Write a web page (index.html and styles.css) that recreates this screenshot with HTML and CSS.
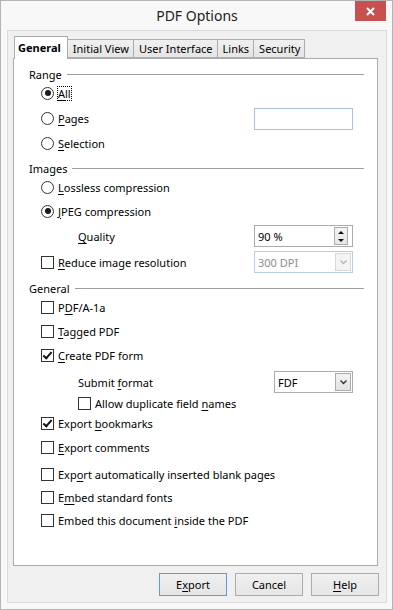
FILE: index.html
```html
<!DOCTYPE html>
<html lang="en">
<head>
    <meta charset="UTF-8">
    <meta name="viewport" content="width=device-width, initial-scale=1.0">
    <title>PDF Options</title>
    <link rel="stylesheet" href="styles.css">
</head>
<body>

    <div class="window">
        <div class="titlebar">
            <span></span>
            <div class="title">PDF Options</div>
            <button class="close" title="Close">
                <svg width="9" height="9" viewBox="0 0 9 9"><path d="M1 1 L8 8 M8 1 L1 8" stroke="#fff" stroke-width="2"/></svg>
            </button>
        </div>

        <div class="client">
            <div class="tabs">
                <div class="tab active">General</div>
                <div class="tab">Initial View</div>
                <div class="tab">User Interface</div>
                <div class="tab">Links</div>
                <div class="tab">Security</div>
            </div>

            <div class="panel">
                <!-- Range -->
                <div class="group">
                    <div class="group-title">Range</div>
                    <div class="row">
                        <span class="radio checked"></span>
                        <span class="focus"><u>A</u>ll</span>
                    </div>
                    <div class="row tall">
                        <span class="radio"></span>
                        <span><u>P</u>ages</span>
                        <div class="textbox"></div>
                    </div>
                    <div class="row">
                        <span class="radio"></span>
                        <span><u>S</u>election</span>
                    </div>
                </div>

                <!-- Images -->
                <div class="group">
                    <div class="group-title">Images</div>
                    <div class="row">
                        <span class="radio"></span>
                        <span><u>L</u>ossless compression</span>
                    </div>
                    <div class="row">
                        <span class="radio checked"></span>
                        <span><u>J</u>PEG compression</span>
                    </div>
                    <div class="row tall sub">
                        <span><u>Q</u>uality</span>
                        <div class="spin">
                            <span class="spin-value">90 %</span>
                            <span class="spin-buttons">
                                <span class="arrow up"></span>
                                <span class="arrow down"></span>
                            </span>
                        </div>
                    </div>
                    <div class="row tall">
                        <span class="check"></span>
                        <span><u>R</u>educe image resolution</span>
                        <div class="combo disabled">
                            <span class="combo-value">300 DPI</span>
                            <span class="combo-button">
                                <svg width="7" height="5" viewBox="0 0 7 5"><path d="M0.5 0.5 L3.5 3.5 L6.5 0.5" fill="none" stroke="#b5b5b5" stroke-width="1.4"/></svg>
                            </span>
                        </div>
                    </div>
                </div>

                <!-- General -->
                <div class="group">
                    <div class="group-title">General</div>
                    <div class="row">
                        <span class="check"></span>
                        <span>P<u>D</u>F/A-1a</span>
                    </div>
                    <div class="row">
                        <span class="check"></span>
                        <span><u>T</u>agged PDF</span>
                    </div>
                    <div class="row">
                        <span class="check checked"></span>
                        <span><u>C</u>reate PDF form</span>
                    </div>
                    <div class="row tall sub spaced">
                        <span>Submit <u>f</u>ormat</span>
                        <div class="combo short">
                            <span class="combo-value">FDF</span>
                            <span class="combo-button">
                                <svg width="7" height="5" viewBox="0 0 7 5"><path d="M0.5 0.5 L3.5 3.5 L6.5 0.5" fill="none" stroke="#333" stroke-width="1.4"/></svg>
                            </span>
                        </div>
                    </div>
                    <div class="row small sub">
                        <span class="check"></span>
                        <span>Allow duplicate field <u>n</u>ames</span>
                    </div>
                    <div class="row">
                        <span class="check checked"></span>
                        <span>Export <u>b</u>ookmarks</span>
                    </div>
                    <div class="row">
                        <span class="check"></span>
                        <span><u>E</u>xport comments</span>
                    </div>
                    <div class="row spaced-more">
                        <span class="check"></span>
                        <span>Exp<u>o</u>rt automatically inserted blank pages</span>
                    </div>
                    <div class="row short-row">
                        <span class="check"></span>
                        <span>E<u>m</u>bed standard fonts</span>
                    </div>
                    <div class="row">
                        <span class="check"></span>
                        <span>Embed this document <u>i</u>nside the PDF</span>
                    </div>
                </div>
            </div>

            <div class="buttons">
                <button class="default">E<u>x</u>port</button>
                <button>Cancel</button>
                <button><u>H</u>elp</button>
            </div>
        </div>
    </div>

</body>
</html>
```

FILE: styles.css
```css
body {
    margin: 0;
    font-family: "Noto Sans", "Open Sans", sans-serif;
    font-size: 11px;
    color: #000;
    background-color: #fff;
}
u {
    text-decoration-thickness: 1px;
    text-underline-offset: 2px;
}
.window {
    width: 393px;
    height: 610px;
    box-sizing: border-box;
    border: 1px solid #b4b4b4;
    background-color: #f8f8f8;
    padding: 0 5px 6px 6px;
    display: flex;
    flex-direction: column;
}
.titlebar {
    height: 29px;
    display: grid;
    grid-template-columns: 1fr auto 1fr;
    align-items: start;
}
.title {
    font-size: 14px;
    line-height: 30px;
    color: #222;
}
.close {
    justify-self: end;
    width: 31px;
    height: 20px;
    margin-right: 1px;
    border: none;
    padding: 0;
    background-color: #c75050;
    display: flex;
    align-items: center;
    justify-content: center;
}
.client {
    flex: 1;
    border: 1px solid #dadada;
    background-color: #f0f0f0;
    padding: 5px 8px 0 5px;
    display: flex;
    flex-direction: column;
}
.tabs {
    display: flex;
    align-items: flex-end;
    height: 22px;
    margin-left: 1px;
    position: relative;
    z-index: 1;
}
.tab {
    height: 19px;
    line-height: 18px;
    box-sizing: border-box;
    padding: 0 4px 0 5px;
    border: 1px solid #acacac;
    border-left: none;
    background: linear-gradient(#f0f0f0, #e5e5e5);
}
.tab.active {
    height: 23px;
    margin-bottom: -1px;
    border-left: 1px solid #acacac;
    border-bottom: none;
    background: #fff;
    font-weight: bold;
    line-height: 22px;
    padding: 0 6px 0 3px;
}
.panel {
    height: 508px;
    box-sizing: border-box;
    background-color: #fff;
    border: 1px solid #acacac;
    padding: 8px 13px 0 15px;
}
.group {
    margin-bottom: 6px;
}
.group-title {
    height: 14px;
    display: flex;
    align-items: center;
    gap: 5px;
}
.group-title::after {
    content: "";
    flex: 1;
    height: 1px;
    background-color: #a0a0a0;
}
.row {
    height: 24px;
    display: flex;
    align-items: center;
    gap: 4px;
    padding: 0 11px 0 12px;
}
.row.tall {
    height: 26px;
}
.row.small {
    height: 16px;
}
.row.sub {
    padding-left: 49px;
}
.row.spaced {
    margin-top: 2px;
}
.row.spaced-more {
    margin-top: 3px;
}
.row.short-row {
    height: 22px;
}
.focus {
    outline: 1px dotted #000;
    outline-offset: 0;
    line-height: 13px;
}
.radio, .check {
    width: 13px;
    height: 13px;
    box-sizing: border-box;
    border: 1px solid #333;
    background-color: #fff;
    flex: none;
    display: flex;
    align-items: center;
    justify-content: center;
}
.radio {
    border-radius: 50%;
}
.radio.checked::after {
    content: "";
    width: 6px;
    height: 6px;
    border-radius: 50%;
    background-color: #1a1a1a;
}
.check.checked::after {
    content: "";
    width: 7px;
    height: 3px;
    border-left: 2px solid #111;
    border-bottom: 2px solid #111;
    transform: translate(0, -1px) rotate(-48deg);
}
.textbox, .spin, .combo {
    margin-left: auto;
    width: 99px;
    height: 22px;
    box-sizing: border-box;
    background-color: #fff;
    display: flex;
    align-items: center;
}
.textbox {
    border: 1px solid #abc1da;
    margin-top: 1px;
    margin-bottom: -1px;
}
.spin {
    border: 1px solid #acacac;
    padding: 0 3px 0 3px;
}
.spin-value, .combo-value {
    flex: 1;
}
.spin-buttons {
    width: 14px;
    height: 18px;
    box-sizing: border-box;
    border: 1px solid #acacac;
    background: linear-gradient(#f4f4f4, #e6e6e6);
    display: flex;
    flex-direction: column;
    align-items: center;
    justify-content: space-around;
    margin-right: 1px;
}
.arrow {
    width: 0;
    height: 0;
    border-left: 3px solid transparent;
    border-right: 3px solid transparent;
}
.arrow.up {
    border-bottom: 3px solid #111;
}
.arrow.down {
    border-top: 3px solid #111;
}
.combo {
    border: 1px solid #acacac;
    padding: 0 1px 0 3px;
}
.combo.short {
    width: 79px;
}
.combo.disabled {
    border-color: #b9cde3;
    color: #8d8d8d;
}
.combo-button {
    width: 16px;
    height: 18px;
    box-sizing: border-box;
    border: 1px solid #acacac;
    background: linear-gradient(#f2f2f2, #e3e3e3);
    display: flex;
    align-items: center;
    justify-content: center;
}
.combo.disabled .combo-button {
    border-color: #d9d9d9;
    background: #f4f4f4;
}
.buttons {
    display: flex;
    justify-content: flex-end;
    gap: 8px;
    margin-top: 7px;
    margin-right: -1px;
}
.buttons button {
    width: 68px;
    height: 23px;
    border: 1px solid #acacac;
    background: linear-gradient(#f0f0f0, #e5e5e5);
    font-family: inherit;
    font-size: 11px;
    color: #000;
    padding: 0;
}
.buttons button.default {
    border-color: #569de5;
}
```
